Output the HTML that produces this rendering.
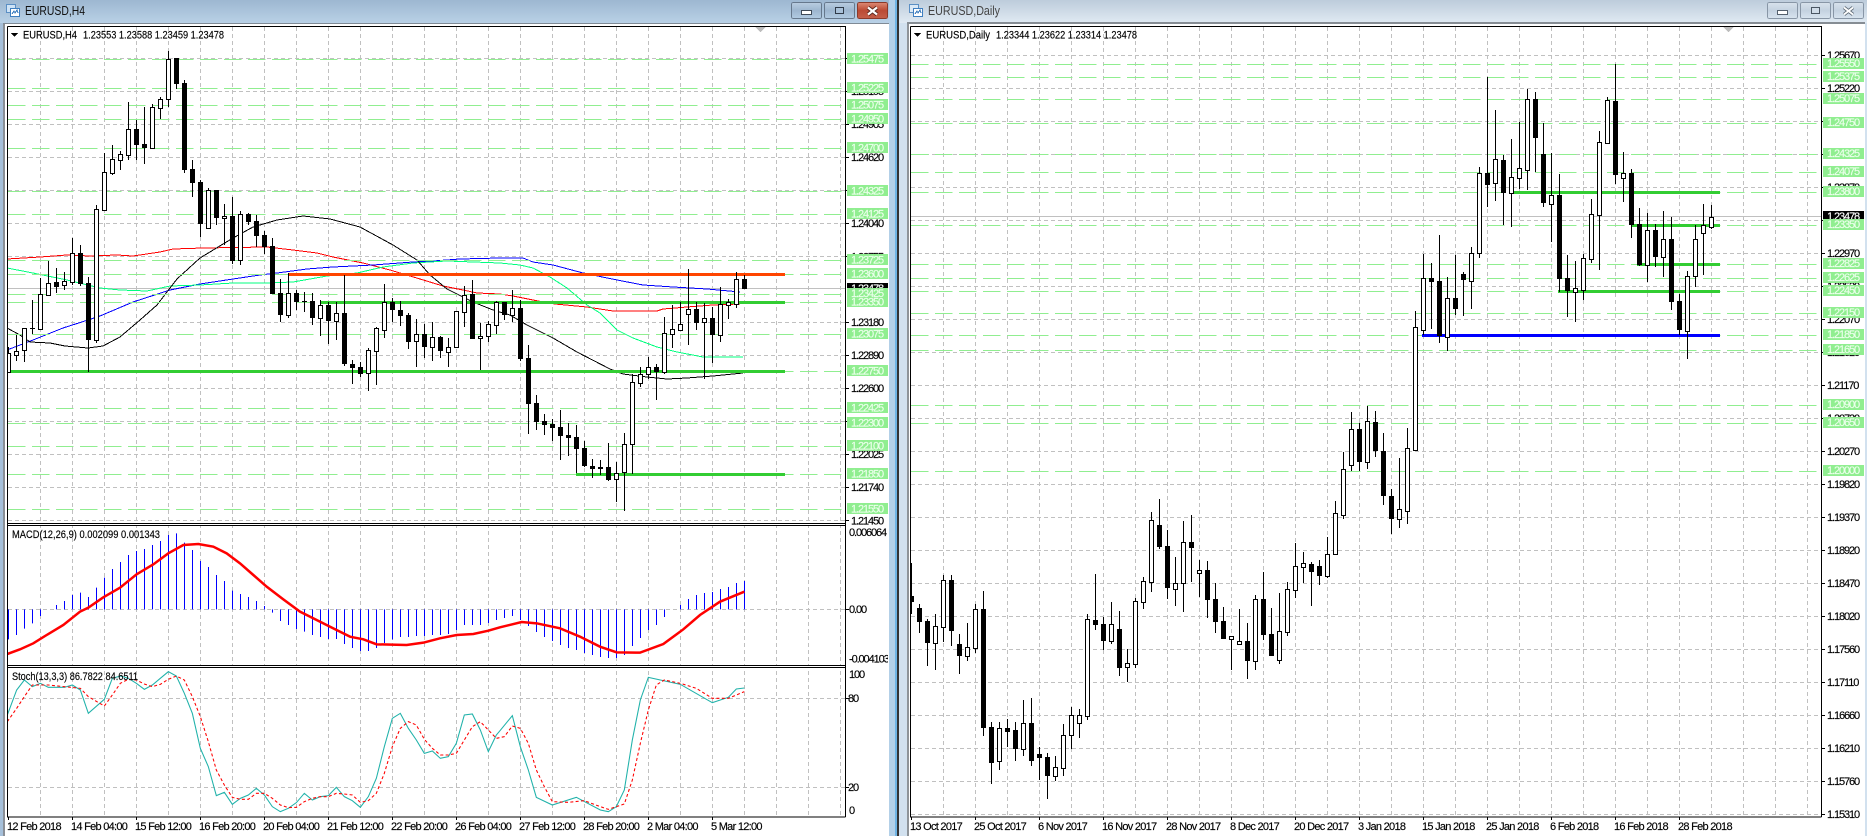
<!DOCTYPE html>
<html><head><meta charset="utf-8"><title>EURUSD</title>
<style>
html,body{margin:0;padding:0;width:1867px;height:836px;overflow:hidden;background:#fff}
svg{display:block;shape-rendering:crispEdges}
text{font-family:"Liberation Sans",sans-serif;font-size:11px;fill:#000;stroke:#000;stroke-width:.15px;letter-spacing:-1.1px}
.t{letter-spacing:-.72px}
.h{letter-spacing:0}
.l{fill:#eaffea;stroke:#eaffea}
.w{fill:#fff;stroke:#fff}
.g{stroke:#c0c0c0;stroke-width:1;stroke-dasharray:4 3;fill:none}
.d{stroke:#90ee90;stroke-width:1;stroke-dasharray:17.5 6.5;fill:none}
.n{fill:none}
</style></head><body>
<svg width="1867" height="836" viewBox="0 0 1867 836" xmlns="http://www.w3.org/2000/svg">
<defs>
<linearGradient id="tl" x1="0" y1="0" x2="0" y2="1"><stop offset="0" stop-color="#9db7d1"/><stop offset="1" stop-color="#b9d1e6"/></linearGradient>
<linearGradient id="tr" x1="0" y1="0" x2="0" y2="1"><stop offset="0" stop-color="#bdccdb"/><stop offset="1" stop-color="#e0eaf3"/></linearGradient>
<linearGradient id="bl" x1="0" y1="0" x2="0" y2="1"><stop offset="0" stop-color="#b9cde0"/><stop offset=".5" stop-color="#9db6cf"/><stop offset="1" stop-color="#b2cbe2"/></linearGradient>
<linearGradient id="bc" x1="0" y1="0" x2="0" y2="1"><stop offset="0" stop-color="#dd8a75"/><stop offset=".5" stop-color="#bb4a34"/><stop offset="1" stop-color="#c4604a"/></linearGradient>
<linearGradient id="br" x1="0" y1="0" x2="0" y2="1"><stop offset="0" stop-color="#d8e2ec"/><stop offset=".5" stop-color="#c4d2e0"/><stop offset="1" stop-color="#d8e4ef"/></linearGradient>
<clipPath id="cl"><rect x="8" y="27" width="837" height="790"/></clipPath>
<clipPath id="cr"><rect x="911" y="27" width="910" height="790"/></clipPath>
<clipPath id="cm"><rect x="847" y="640" width="41" height="30"/></clipPath>
</defs>

<!-- window frames -->
<rect width="1867" height="836" fill="#fff"/>
<rect x="0" y="0" width="890" height="23" fill="url(#tl)"/>
<rect x="0" y="23" width="3" height="813" fill="#a6c0da"/>
<rect x="3" y="23" width="2" height="813" fill="#8a8f96"/>
<rect x="3" y="23" width="886" height="1" fill="#7f8a95"/>
<rect x="889" y="0" width="8" height="836" fill="#b3d0e8"/>
<rect x="895" y="0" width="2" height="836" fill="#6fb4e4"/>
<rect x="897" y="0" width="2" height="836" fill="#333"/>
<rect x="899" y="0" width="968" height="23" fill="url(#tr)"/>
<rect x="899" y="23" width="8" height="813" fill="#d2e1ef"/>
<rect x="907" y="23" width="2" height="813" fill="#8f9499"/>
<rect x="907" y="22" width="958" height="2" fill="#868d94"/>
<rect x="1865" y="23" width="2" height="813" fill="#d2e1ef"/>

<!-- title bars -->
<g fill="none">
<rect x="6.5" y="4.5" width="9" height="8" fill="#cfe3f6" stroke="#5b8fc4"/>
<rect x="10.5" y="8.5" width="9" height="8" fill="#fff" stroke="#3f7fc0"/>
<path d="M12 14l2-3 1 2 2-3 1 3" stroke="#3f7fc0"/>
<rect x="909.5" y="4.5" width="9" height="8" fill="#dbe9f6" stroke="#5b8fc4"/>
<rect x="913.5" y="8.5" width="9" height="8" fill="#fff" stroke="#3f7fc0"/>
<path d="M915 14l2-3 1 2 2-3 1 3" stroke="#3f7fc0"/>
</g>
<text x="25" y="15" textLength="60" lengthAdjust="spacingAndGlyphs" class="h" style="font-size:12.5px;fill:#111;stroke:none">EURUSD,H4</text>
<text x="928" y="15" textLength="72" lengthAdjust="spacingAndGlyphs" class="h" style="font-size:12.5px;fill:#444;stroke:none">EURUSD,Daily</text>

<!-- buttons -->
<g stroke="#66788c">
<rect x="791.5" y="2.5" width="30" height="16" rx="2" fill="url(#bl)"/>
<rect x="824.5" y="2.5" width="30" height="16" rx="2" fill="url(#bl)"/>
<rect x="857.5" y="2.5" width="30" height="16" rx="2" fill="url(#bc)" stroke="#8c3a2a"/>
</g>
<rect x="801.5" y="10.5" width="10" height="4" fill="#fff" stroke="#3f4a58"/>
<rect x="835.5" y="7.5" width="8" height="6" fill="#a9c1d9" stroke="#2f3a48" stroke-width="1.4"/>
<path d="M868 7.5l9 7M877 7.5l-9 7" stroke="#5c2a20" stroke-width="4" fill="none" style="shape-rendering:auto"/>
<path d="M868 7.5l9 7M877 7.5l-9 7" stroke="#fff" stroke-width="2.2" fill="none" style="shape-rendering:auto"/>
<g stroke="#8896a6">
<rect x="1767.5" y="2.5" width="30" height="16" rx="2" fill="url(#br)"/>
<rect x="1800.5" y="2.5" width="30" height="16" rx="2" fill="url(#br)"/>
<rect x="1833.5" y="2.5" width="30" height="16" rx="2" fill="url(#br)"/>
</g>
<rect x="1777.5" y="10.5" width="10" height="4" fill="#fff" stroke="#55616e"/>
<rect x="1811.5" y="7.5" width="8" height="6" fill="#d0dce8" stroke="#4a5663" stroke-width="1.4"/>
<path d="M1844 7.5l9 7M1853 7.5l-9 7" stroke="#5d6975" stroke-width="3.6" fill="none" style="shape-rendering:auto"/>
<path d="M1844 7.5l9 7M1853 7.5l-9 7" stroke="#fff" stroke-width="1.8" fill="none" style="shape-rendering:auto"/>

<!-- ======== LEFT CHART ======== -->
<g clip-path="url(#cl)">
<path class="g" d="M40.5 27V817M72.5 27V817M104.5 27V817M136.5 27V817M168.5 27V817M200.5 27V817M232.5 27V817M264.5 27V817M296.5 27V817M328.5 27V817M360.5 27V817M392.5 27V817M424.5 27V817M456.5 27V817M488.5 27V817M520.5 27V817M552.5 27V817M584.5 27V817M616.5 27V817M648.5 27V817M680.5 27V817M712.5 27V817M744.5 27V817M776.5 27V817M808.5 27V817M840.5 27V817"/>
<path class="g" d="M8 58.5H845M8 91.5H845M8 124.5H845M8 157.5H845M8 190.5H845M8 223.5H845M8 256.5H845M8 322.5H845M8 355.5H845M8 388.5H845M8 421.5H845M8 454.5H845M8 487.5H845M8 520.5H845M8 609.5H845M8 698.5H845M8 787.5H845"/>
<path d="M8 288.5H845" stroke="#c0c0c0" fill="none"/>
<!-- moving averages -->
<polyline class="n" stroke="#ff0000" points="7,259 40,257 67,255 90,256 117,255 133,256 160,252 173,249 203,248 267,247 293,250 317,253 333,257 363,263 390,270 420,279 443,286 463,290 477,293 500,294 513,296 538,301 555,304 587,307 613,311 657,311 663,309 687,307 713,305 740,304"/>
<polyline class="n" stroke="#0000ff" points="7,350 33,340 63,328 88,320 100,316 133,302 170,290 200,284 233,279 260,275 277,273 307,269 333,267 373,265 413,262 433,261 460,259 500,258 523,258 533,262 553,265 583,273 617,280 643,285 673,287 707,289 740,292"/>
<polyline class="n" stroke="#00ff7f" points="7,268 33,273 67,280 100,288 120,290 147,291 170,286 200,285 233,283 267,283 293,282 327,276 357,273 383,267 413,263 447,261 500,263 520,265 533,268 550,277 567,288 587,305 600,313 617,330 633,338 657,347 677,352 703,357 743,357"/>
<polyline class="n" stroke="#000" points="7,328 20,335 30,342 50,343 65,346 88,348 103,346 120,337 140,320 157,305 170,288 177,279 200,258 233,238 253,227 277,220 303,216 330,219 360,227 393,245 417,260 430,275 447,289 473,302 493,310 510,315 527,325 553,338 577,352 610,369 623,374 647,377 667,379 687,378 713,376 743,373"/>
<!-- levels above averages -->
<path class="d" d="M8 59.5H845M8 88.5H845M8 105.5H845M8 119.5H845M8 148.5H845M8 191.5H845M8 214.5H845M8 260.5H845M8 274.5H845M8 294.5H845M8 302.5H845M8 334.5H845M8 371.5H845M8 408.5H845M8 423.5H845M8 446.5H845M8 474.5H845M8 509.5H845"/>
<path d="M288 274.5H785" stroke="#ff4500" stroke-width="3" fill="none"/>
<path d="M320 302.5H785M8 371.5H785M576 474.5H785" stroke="#32cd32" stroke-width="3" fill="none"/>
<!-- candles H4 -->
<path class="n" stroke="#000" d="M8.5 347V373M16.5 335V361M24.5 328V362M32.5 300V334M40.5 278V330M48.5 261V295M56.5 268V293M64.5 272V290M72.5 238V285M80.5 245V286M88.5 277V372M96.5 205V343M104.5 153V211M112.5 145V175M120.5 151V170M128.5 102V160M136.5 120V160M144.5 107V164M152.5 104V149M160.5 97V119M168.5 51V107M176.5 58V89M184.5 80V173M192.5 160V197M200.5 180V237M208.5 188V228M216.5 190V225M224.5 204V245M232.5 197V264M240.5 211V265M248.5 213V225M256.5 215V247M264.5 231V254M272.5 238V294M280.5 279V322M288.5 273V318M296.5 290V310M304.5 292V312M312.5 293V325M320.5 300V336M328.5 302V344M336.5 302V340M344.5 275V366M352.5 360V384M360.5 362V377M368.5 348V391M376.5 327V385M384.5 284V338M392.5 298V322M400.5 301V326M408.5 313V349M416.5 319V367M424.5 324V358M432.5 322V361M440.5 336V358M448.5 338V367M456.5 311V347M464.5 286V327M472.5 280V339M480.5 323V370M488.5 321V342M496.5 301V334M504.5 302V320M512.5 290V322M520.5 300V361M528.5 345V434M536.5 395V430M544.5 414V435M552.5 419V441M560.5 410V460M568.5 423V456M576.5 425V473M584.5 441V467M592.5 459V478M600.5 460V475M608.5 443V481M616.5 462V502M624.5 433V511M632.5 374V474M640.5 367V387M648.5 357V379M656.5 364V400M664.5 317V374M672.5 305V348M680.5 302V330M688.5 269V345M696.5 302V330M704.5 303V379M712.5 307V363M720.5 287V342M728.5 299V319M736.5 272V308M744.5 275V289"/>
<path fill="#fff" stroke="#000" d="M6.5 353.5h4v19h-4zM14.5 351.5h4v4h-4zM22.5 328.5h4v22h-4zM38.5 294.5h4v35h-4zM46.5 283.5h4v12h-4zM62.5 281.5h4v4h-4zM70.5 253.5h4v29h-4zM94.5 209.5h4v131h-4zM102.5 172.5h4v38h-4zM110.5 159.5h4v14h-4zM118.5 154.5h4v6h-4zM126.5 129.5h4v26h-4zM150.5 107.5h4v41h-4zM158.5 99.5h4v9h-4zM166.5 59.5h4v40h-4zM206.5 190.5h4v38h-4zM222.5 216.5h4v2h-4zM238.5 214.5h4v46h-4zM286.5 293.5h4v22h-4zM318.5 305.5h4v13h-4zM334.5 313.5h4v8h-4zM366.5 350.5h4v23h-4zM374.5 328.5h4v23h-4zM382.5 302.5h4v28h-4zM414.5 334.5h4v7h-4zM430.5 337.5h4v10h-4zM446.5 347.5h4v5h-4zM454.5 311.5h4v36h-4zM462.5 295.5h4v17h-4zM478.5 336.5h4v2h-4zM486.5 324.5h4v12h-4zM494.5 302.5h4v23h-4zM510.5 308.5h4v7h-4zM614.5 473.5h4v6h-4zM622.5 444.5h4v28h-4zM630.5 382.5h4v62h-4zM638.5 374.5h4v9h-4zM646.5 367.5h4v7h-4zM662.5 333.5h4v39h-4zM670.5 329.5h4v5h-4zM678.5 324.5h4v6h-4zM686.5 309.5h4v5h-4zM702.5 318.5h4v4h-4zM718.5 304.5h4v31h-4zM726.5 302.5h4v3h-4zM734.5 279.5h4v25h-4z"/>
<path fill="#000" d="M30 328h5v1h-5zM54 282h5v5h-5zM78 253h5v31h-5zM86 283h5v57h-5zM134 129h5v16h-5zM142 144h5v4h-5zM174 58h5v26h-5zM182 83h5v87h-5zM190 169h5v14h-5zM198 182h5v42h-5zM214 190h5v28h-5zM230 216h5v45h-5zM246 214h5v8h-5zM254 221h5v15h-5zM262 235h5v12h-5zM270 246h5v48h-5zM278 293h5v22h-5zM294 293h5v9h-5zM302 301h5v1h-5zM310 301h5v17h-5zM326 305h5v16h-5zM342 313h5v51h-5zM350 364h5v4h-5zM358 367h5v7h-5zM390 302h5v8h-5zM398 310h5v6h-5zM406 315h5v27h-5zM422 334h5v13h-5zM438 337h5v14h-5zM470 294h5v45h-5zM502 302h5v13h-5zM518 308h5v51h-5zM526 358h5v46h-5zM534 403h5v19h-5zM542 421h5v4h-5zM550 424h5v4h-5zM558 427h5v9h-5zM566 435h5v3h-5zM574 437h5v12h-5zM582 448h5v18h-5zM590 466h5v3h-5zM598 467h5v2h-5zM606 467h5v13h-5zM654 367h5v5h-5zM694 309h5v14h-5zM710 318h5v17h-5zM742 279h5v10h-5z"/>
<!-- MACD bars -->
<path class="n" stroke="#0000ff" transform="translate(0 540) scale(1 .33333)" d="M8.5 208V298M16.5 208V285M24.5 208V266M32.5 208V250M40.5 208V228M56.5 208V195M64.5 208V183M72.5 208V165M80.5 208V158M88.5 208V171M96.5 208V143M104.5 208V113M112.5 208V87M120.5 208V66M128.5 208V45M136.5 208V33M144.5 208V27M152.5 208V15M160.5 208V3M168.5 208V-15M176.5 208V-20M184.5 208V8M192.5 208V30M200.5 208V63M208.5 208V81M216.5 208V105M224.5 208V123M232.5 208V152M240.5 208V162M248.5 208V171M256.5 208V183M264.5 208V198M272.5 208V218M280.5 208V243M288.5 208V255M296.5 208V267M304.5 208V275M312.5 208V285M320.5 208V291M328.5 208V297M336.5 208V297M344.5 208V312M352.5 208V324M360.5 208V333M368.5 208V333M376.5 208V324M384.5 208V309M392.5 208V298M400.5 208V291M408.5 208V291M416.5 208V288M424.5 208V288M432.5 208V285M440.5 208V285M448.5 208V282M456.5 208V270M464.5 208V255M472.5 208V255M480.5 208V255M488.5 208V249M496.5 208V240M504.5 208V234M512.5 208V228M520.5 208V240M528.5 208V258M536.5 208V276M544.5 208V291M552.5 208V303M560.5 208V315M568.5 208V324M576.5 208V330M584.5 208V339M592.5 208V345M600.5 208V351M608.5 208V354M616.5 208V354M624.5 208V345M632.5 208V318M640.5 208V294M648.5 208V270M656.5 208V255M664.5 208V231M680.5 208V195M688.5 208V177M696.5 208V165M704.5 208V159M712.5 208V156M720.5 208V147M728.5 208V141M736.5 208V129M744.5 208V123"/>
<g transform="translate(0 540) scale(.33333)" fill="none" style="shape-rendering:auto">
<polyline stroke="#ff0000" stroke-width="7.500" points="22,342 60,328 100,310 140,285 190,255 240,215 265,203 310,172 360,143 410,103 460,73 505,40 550,15 595,12 640,20 680,40 720,70 760,105 800,140 850,178 900,215 950,240 1000,265 1050,290 1090,298 1130,313 1220,315 1270,308 1320,295 1370,285 1420,282 1465,272 1500,262 1565,246 1610,250 1680,265 1740,290 1800,320 1850,337 1920,338 1990,312 2050,268 2100,225 2160,185 2233,155"/>
<polyline stroke="#20b2aa" stroke-width="3.200" points="22,525 50,450 73,420 97,440 121,430 145,442 193,442 217,435 241,450 265,520 313,478 337,415 361,408 385,415 409,430 433,448 457,435 481,415 505,395 529,408 553,460 577,520 601,625 625,680 649,767 673,757 697,793 721,775 745,765 769,745 793,765 817,800 841,815 865,805 889,788 913,760 937,780 961,770 985,767 1009,742 1033,770 1057,782 1081,802 1105,770 1129,715 1153,620 1177,535 1201,520 1225,565 1249,600 1273,640 1297,633 1321,655 1345,650 1369,610 1393,525 1417,522 1441,570 1465,635 1489,585 1500,572 1537,527 1561,620 1585,690 1609,772 1657,795 1729,772 1801,810 1825,815 1849,800 1873,750 1897,600 1921,480 1945,412 2041,433 2137,488 2185,472 2209,447 2233,444"/>
<polyline stroke="#ff0000" stroke-width="3.200" stroke-dasharray="9 7" points="22,545 50,505 73,470 97,435 145,435 193,440 241,445 265,470 313,498 337,465 361,430 385,418 409,420 433,432 457,440 481,433 505,418 529,408 553,420 577,470 601,530 625,605 649,690 673,735 697,772 721,778 745,778 769,760 793,760 817,775 841,795 865,803 889,802 913,785 937,775 961,770 985,770 1009,760 1033,762 1057,765 1081,787 1105,782 1129,760 1153,700 1177,620 1201,565 1225,545 1249,555 1273,598 1297,625 1321,645 1345,645 1369,640 1393,600 1417,560 1441,545 1465,570 1489,595 1513,590 1537,558 1561,565 1585,610 1609,690 1633,740 1657,785 1705,787 1753,782 1801,800 1825,808 1873,792 1897,720 1921,610 1945,510 1969,435 1993,420 2041,430 2089,445 2137,475 2185,475 2233,455"/>
</g>
<rect x="8" y="524" width="837" height="1" fill="#fff"/>
<rect x="8" y="666" width="837" height="1" fill="#fff"/>
</g>
<path d="M755 27h11l-5.500 5z" fill="#bdbdbd"/>
<!-- left chart frame -->
<path class="n" stroke="#000" d="M7.500 26.500H845.500V817M7.500 26.500V817H845.500M8 523.500H845M8 525.500H845M8 665.500H845M8 667.500H845"/>
<path d="M11 33h7l-3.500 4z" fill="#000"/>
<text x="23" y="38.500" textLength="54" lengthAdjust="spacingAndGlyphs" class="h">EURUSD,H4</text>
<text x="83" y="38.500" textLength="141" lengthAdjust="spacingAndGlyphs" class="h">1.23553 1.23588 1.23459 1.23478</text>
<text x="12" y="538" textLength="148" lengthAdjust="spacingAndGlyphs" class="h">MACD(12,26,9) 0.002099 0.001343</text>
<text x="12" y="680" textLength="126" lengthAdjust="spacingAndGlyphs" class="h">Stoch(13,3,3) 86.7822 84.6511</text>

<!-- left axis -->
<path class="n" stroke="#000" d="M846 58.500h3M846 91.500h3M846 124.500h3M846 157.500h3M846 190.500h3M846 223.500h3M846 256.500h3M846 322.500h3M846 355.500h3M846 388.500h3M846 421.500h3M846 454.500h3M846 487.500h3M846 520.500h3M846 609.500h3M846 698.500h3M846 787.500h3M8.500 817v3M72.500 817v3M136.500 817v3M200.500 817v3M264.500 817v3M328.500 817v3M392.500 817v3M456.500 817v3M520.500 817v3M584.500 817v3M648.500 817v3M712.500 817v3"/>
<g>
<text x="851" y="95">1.25195</text><text x="851" y="128">1.24905</text><text x="851" y="161">1.24620</text><text x="851" y="227">1.24040</text><text x="851" y="260.500">1.23755</text><text x="851" y="326">1.23180</text><text x="851" y="359">1.22890</text><text x="851" y="392">1.22600</text><text x="851" y="458">1.22025</text><text x="851" y="491">1.21740</text><text x="851" y="524.500">1.21450</text>
</g>
<g clip-path="url(#cm)"><text x="849" y="662.500">-0.004103</text></g>
<text x="849" y="536">0.006064</text>
<text x="849" y="613">0.00</text>
<text x="849" y="678">100</text>
<text x="848" y="702">80</text>
<text x="848" y="791">20</text>
<text x="849" y="814">0</text>
<rect x="847" y="283" width="41" height="11" fill="#000"/>
<text x="851" y="292" class="w">1.23478</text>
<g fill="#90ee90">
<rect x="847" y="53" width="41" height="11"/><rect x="847" y="82" width="41" height="11"/><rect x="847" y="99" width="41" height="11"/><rect x="847" y="113" width="41" height="11"/><rect x="847" y="142" width="41" height="11"/><rect x="847" y="185" width="41" height="11"/><rect x="847" y="208" width="41" height="11"/><rect x="847" y="254" width="41" height="11"/><rect x="847" y="268" width="41" height="11"/><rect x="847" y="288" width="41" height="11"/><rect x="847" y="296" width="41" height="11"/><rect x="847" y="328" width="41" height="11"/><rect x="847" y="365" width="41" height="11"/><rect x="847" y="402" width="41" height="11"/><rect x="847" y="417" width="41" height="11"/><rect x="847" y="440" width="41" height="11"/><rect x="847" y="468" width="41" height="11"/><rect x="847" y="503" width="41" height="11"/>
</g>
<g>
<text class="l" x="851" y="62.500">1.25475</text><text class="l" x="851" y="91.500">1.25225</text><text class="l" x="851" y="108.500">1.25075</text><text class="l" x="851" y="122.500">1.24950</text><text class="l" x="851" y="151.500">1.24700</text><text class="l" x="851" y="194.500">1.24325</text><text class="l" x="851" y="217.500">1.24125</text><text class="l" x="851" y="263.500">1.23725</text><text class="l" x="851" y="277.500">1.23600</text><text class="l" x="851" y="297">1.23425</text><text class="l" x="851" y="305.500">1.23350</text><text class="l" x="851" y="337.500">1.23075</text><text class="l" x="851" y="374.500">1.22750</text><text class="l" x="851" y="411.500">1.22425</text><text class="l" x="851" y="426.500">1.22300</text><text class="l" x="851" y="449.500">1.22100</text><text class="l" x="851" y="477.500">1.21850</text><text class="l" x="851" y="512.500">1.21550</text>
</g>
<g>
<text class="t" x="7" y="830">12 Feb 2018</text><text class="t" x="71" y="830">14 Feb 04:00</text><text class="t" x="135" y="830">15 Feb 12:00</text><text class="t" x="199" y="830">16 Feb 20:00</text><text class="t" x="263" y="830">20 Feb 04:00</text><text class="t" x="327" y="830">21 Feb 12:00</text><text class="t" x="391" y="830">22 Feb 20:00</text><text class="t" x="455" y="830">26 Feb 04:00</text><text class="t" x="519" y="830">27 Feb 12:00</text><text class="t" x="583" y="830">28 Feb 20:00</text><text class="t" x="647" y="830">2 Mar 04:00</text><text class="t" x="711" y="830">5 Mar 12:00</text>
</g>

<!-- ======== RIGHT CHART ======== -->
<g clip-path="url(#cr)">
<path class="g" d="M943.500 27V817M975.500 27V817M1007.500 27V817M1039.500 27V817M1071.500 27V817M1103.500 27V817M1135.500 27V817M1167.500 27V817M1199.500 27V817M1231.500 27V817M1263.500 27V817M1295.500 27V817M1327.500 27V817M1359.500 27V817M1391.500 27V817M1423.500 27V817M1455.500 27V817M1487.500 27V817M1519.500 27V817M1551.500 27V817M1583.500 27V817M1615.500 27V817M1647.500 27V817M1679.500 27V817M1711.500 27V817M1743.500 27V817M1775.500 27V817M1807.500 27V817"/>
<path class="g" d="M911 55.500H1821M911 88.500H1821M911 121.500H1821M911 154.500H1821M911 187.500H1821M911 220.500H1821M911 253.500H1821M911 286.500H1821M911 319.500H1821M911 352.500H1821M911 385.500H1821M911 418.500H1821M911 451.500H1821M911 484.500H1821M911 517.500H1821M911 550.500H1821M911 583.500H1821M911 616.500H1821M911 649.500H1821M911 682.500H1821M911 715.500H1821M911 748.500H1821M911 781.500H1821M911 814.500H1821"/>
<path class="d" d="M911 64.500H1821M911 77.500H1821M911 99.500H1821M911 123.500H1821M911 154.500H1821M911 172.500H1821M911 192.500H1821M911 225.500H1821M911 264.500H1821M911 278.500H1821M911 291.500H1821M911 313.500H1821M911 335.500H1821M911 350.500H1821M911 405.500H1821M911 423.500H1821M911 471.500H1821"/>
<path d="M911 216.500H1821" stroke="#c0c0c0" fill="none"/>
<path d="M1510 192.500H1720M1632 225.500H1720M1637 264.500H1720M1558 291.500H1720" stroke="#32cd32" stroke-width="3" fill="none"/>
<path d="M1422 335.500H1720" stroke="#0000ff" stroke-width="3" fill="none"/>
<path class="n" stroke="#000" d="M911.500 563V614M919.500 604V633M927.500 619V666M935.500 614V670M943.500 575V642M951.500 575V646M959.500 634V674M967.500 623V661M975.500 604V653M983.500 591V736M991.500 722V784M999.500 722V770M1007.500 719V747M1015.500 722V761M1023.500 700V756M1031.500 698V766M1039.500 747V780M1047.500 753V799M1055.500 756V781M1063.500 724V776M1071.500 707V749M1079.500 709V738M1087.500 614V720M1095.500 574V630M1103.500 617V650M1111.500 602V644M1119.500 611V676M1127.500 649V682M1135.500 598V668M1143.500 577V609M1151.500 512V592M1159.500 499V549M1167.500 530V599M1175.500 557V606M1183.500 521V612M1191.500 515V582M1199.500 560V597M1207.500 561V618M1215.500 583V633M1223.500 607V639M1231.500 636V670M1239.500 609V645M1247.500 623V679M1255.500 595V670M1263.500 572V640M1271.500 608V656M1279.500 593V664M1287.500 582V636M1295.500 543V598M1303.500 552V583M1311.500 562V606M1319.500 560V585M1327.500 537V578M1335.500 501V554M1343.500 452V519M1351.500 412V471M1359.500 423V471M1367.500 406V469M1375.500 411V457M1383.500 433V505M1391.500 489V534M1399.500 458V528M1407.500 428V524M1415.500 311V450M1423.500 254V335M1431.500 263V329M1439.500 235V343M1447.500 277V351M1455.500 255V315M1463.500 272V316M1471.500 247V309M1479.500 167V258M1487.500 77V207M1495.500 110V201M1503.500 155V225M1511.500 139V227M1519.500 122V189M1527.500 89V190M1535.500 92V172M1543.500 123V207M1551.500 153V242M1559.500 174V292M1567.500 255V317M1575.500 261V322M1583.500 254V300M1591.500 199V263M1599.500 131V270M1607.500 97V143M1615.500 64V184M1623.500 152V202M1631.500 169V238M1639.500 208V266M1647.500 213V282M1655.500 224V267M1663.500 211V277M1671.500 217V310M1679.500 294V335M1687.500 271V359M1695.500 225V287M1703.500 204V275M1711.500 205V229"/>
<path fill="#fff" stroke="#000" d="M933.500 626.500h4v17h-4zM941.500 580.500h4v47h-4zM965.500 647.500h4v9h-4zM973.500 609.500h4v39h-4zM997.500 728.500h4v33h-4zM1021.500 723.500h4v26h-4zM1053.500 767.500h4v9h-4zM1061.500 735.500h4v33h-4zM1069.500 715.500h4v20h-4zM1077.500 715.500h4v8h-4zM1085.500 619.500h4v97h-4zM1109.500 624.500h4v17h-4zM1125.500 663.500h4v4h-4zM1133.500 601.500h4v63h-4zM1141.500 581.500h4v21h-4zM1149.500 520.500h4v62h-4zM1173.500 583.500h4v6h-4zM1181.500 542.500h4v41h-4zM1197.500 570.500h4v3h-4zM1229.500 636.500h4v3h-4zM1237.500 641.500h4v3h-4zM1253.500 599.500h4v62h-4zM1277.500 631.500h4v29h-4zM1285.500 589.500h4v43h-4zM1293.500 566.500h4v24h-4zM1301.500 563.500h4v4h-4zM1325.500 554.500h4v22h-4zM1333.500 513.500h4v41h-4zM1341.500 469.500h4v46h-4zM1349.500 429.500h4v36h-4zM1365.500 421.500h4v41h-4zM1397.500 509.500h4v10h-4zM1405.500 448.500h4v63h-4zM1413.500 327.500h4v123h-4zM1421.500 278.500h4v52h-4zM1445.500 298.500h4v39h-4zM1469.500 253.500h4v28h-4zM1477.500 173.500h4v80h-4zM1493.500 159.500h4v24h-4zM1509.500 177.500h4v16h-4zM1517.500 168.500h4v10h-4zM1525.500 99.500h4v71h-4zM1549.500 195.500h4v9h-4zM1573.500 288.500h4v4h-4zM1581.500 258.500h4v32h-4zM1589.500 214.500h4v45h-4zM1597.500 142.500h4v73h-4zM1605.500 100.500h4v43h-4zM1621.500 173.500h4v5h-4zM1645.500 230.500h4v35h-4zM1661.500 239.500h4v18h-4zM1685.500 276.500h4v55h-4zM1693.500 239.500h4v37h-4zM1701.500 225.500h4v8h-4zM1709.500 217.500h4v10h-4z"/>
<path fill="#000" d="M909 596h5v6h-5zM917 608h5v14h-5zM925 621h5v22h-5zM949 580h5v51h-5zM957 644h5v12h-5zM981 609h5v119h-5zM989 727h5v36h-5zM1005 728h5v4h-5zM1013 730h5v19h-5zM1029 723h5v38h-5zM1037 754h5v4h-5zM1045 757h5v19h-5zM1093 620h5v5h-5zM1101 624h5v17h-5zM1117 629h5v39h-5zM1157 525h5v22h-5zM1165 546h5v42h-5zM1189 542h5v6h-5zM1205 570h5v30h-5zM1213 599h5v23h-5zM1221 621h5v18h-5zM1245 641h5v20h-5zM1261 599h5v36h-5zM1269 634h5v22h-5zM1309 564h5v8h-5zM1317 566h5v10h-5zM1357 429h5v33h-5zM1373 422h5v29h-5zM1381 451h5v45h-5zM1389 496h5v23h-5zM1429 278h5v4h-5zM1437 281h5v55h-5zM1453 298h5v11h-5zM1461 274h5v6h-5zM1485 173h5v12h-5zM1501 160h5v33h-5zM1533 99h5v39h-5zM1541 154h5v49h-5zM1557 195h5v84h-5zM1565 278h5v13h-5zM1613 101h5v74h-5zM1629 173h5v52h-5zM1637 224h5v41h-5zM1653 230h5v27h-5zM1669 239h5v63h-5zM1677 301h5v29h-5z"/>
</g>
<path d="M1723 27h11l-5.500 5z" fill="#bdbdbd"/>
<path class="n" stroke="#000" d="M910.500 26.500H1821.500V817M910.500 26.500V817H1821.500"/>
<path d="M914 33h7l-3.500 4z" fill="#000"/>
<text x="926" y="38.500" textLength="64" lengthAdjust="spacingAndGlyphs" class="h">EURUSD,Daily</text>
<text x="996" y="38.500" textLength="141" lengthAdjust="spacingAndGlyphs" class="h">1.23344 1.23622 1.23314 1.23478</text>

<path class="n" stroke="#000" d="M1822 55.500h3M1822 88.500h3M1822 121.500h3M1822 154.500h3M1822 187.500h3M1822 220.500h3M1822 253.500h3M1822 286.500h3M1822 319.500h3M1822 352.500h3M1822 385.500h3M1822 418.500h3M1822 451.500h3M1822 484.500h3M1822 517.500h3M1822 550.500h3M1822 583.500h3M1822 616.500h3M1822 649.500h3M1822 682.500h3M1822 715.500h3M1822 748.500h3M1822 781.500h3M1822 814.500h3M911.500 817v3M975.500 817v3M1039.500 817v3M1103.500 817v3M1167.500 817v3M1231.500 817v3M1295.500 817v3M1359.500 817v3M1423.500 817v3M1487.500 817v3M1551.500 817v3M1615.500 817v3M1679.500 817v3"/>
<g>
<text x="1827" y="59">1.25670</text><text x="1827" y="92">1.25220</text><text x="1827" y="125">1.24770</text><text x="1827" y="158">1.24320</text><text x="1827" y="191">1.23870</text><text x="1827" y="257">1.22970</text><text x="1827" y="290">1.22520</text><text x="1827" y="323">1.22070</text><text x="1827" y="356">1.21620</text><text x="1827" y="389">1.21170</text><text x="1827" y="422">1.20720</text><text x="1827" y="455">1.20270</text><text x="1827" y="488">1.19820</text><text x="1827" y="521">1.19370</text><text x="1827" y="554">1.18920</text><text x="1827" y="587">1.18470</text><text x="1827" y="620">1.18020</text><text x="1827" y="653">1.17560</text><text x="1827" y="686">1.17110</text><text x="1827" y="719">1.16660</text><text x="1827" y="752">1.16210</text><text x="1827" y="785">1.15760</text><text x="1827" y="818">1.15310</text>
</g>
<rect x="1823" y="211" width="41" height="11" fill="#000"/>
<text x="1827" y="220" class="w">1.23478</text>
<g fill="#90ee90">
<rect x="1823" y="58" width="41" height="11"/><rect x="1823" y="71" width="41" height="11"/><rect x="1823" y="93" width="41" height="11"/><rect x="1823" y="117" width="41" height="11"/><rect x="1823" y="148" width="41" height="11"/><rect x="1823" y="166" width="41" height="11"/><rect x="1823" y="186" width="41" height="11"/><rect x="1823" y="219" width="41" height="11"/><rect x="1823" y="258" width="41" height="11"/><rect x="1823" y="272" width="41" height="11"/><rect x="1823" y="285" width="41" height="11"/><rect x="1823" y="307" width="41" height="11"/><rect x="1823" y="329" width="41" height="11"/><rect x="1823" y="344" width="41" height="11"/><rect x="1823" y="399" width="41" height="11"/><rect x="1823" y="417" width="41" height="11"/><rect x="1823" y="465" width="41" height="11"/>
</g>
<g>
<text class="l" x="1827" y="67">1.25550</text><text class="l" x="1827" y="80">1.25375</text><text class="l" x="1827" y="102">1.25075</text><text class="l" x="1827" y="126">1.24750</text><text class="l" x="1827" y="157">1.24325</text><text class="l" x="1827" y="175">1.24075</text><text class="l" x="1827" y="195">1.23800</text><text class="l" x="1827" y="228">1.23350</text><text class="l" x="1827" y="267">1.22825</text><text class="l" x="1827" y="281">1.22625</text><text class="l" x="1827" y="294">1.22450</text><text class="l" x="1827" y="316">1.22150</text><text class="l" x="1827" y="338">1.21850</text><text class="l" x="1827" y="353">1.21650</text><text class="l" x="1827" y="408">1.20900</text><text class="l" x="1827" y="426">1.20650</text><text class="l" x="1827" y="474">1.20000</text>
</g>
<g>
<text class="t" x="910" y="830">13 Oct 2017</text><text class="t" x="974" y="830">25 Oct 2017</text><text class="t" x="1038" y="830">6 Nov 2017</text><text class="t" x="1102" y="830">16 Nov 2017</text><text class="t" x="1166" y="830">28 Nov 2017</text><text class="t" x="1230" y="830">8 Dec 2017</text><text class="t" x="1294" y="830">20 Dec 2017</text><text class="t" x="1358" y="830">3 Jan 2018</text><text class="t" x="1422" y="830">15 Jan 2018</text><text class="t" x="1486" y="830">25 Jan 2018</text><text class="t" x="1550" y="830">6 Feb 2018</text><text class="t" x="1614" y="830">16 Feb 2018</text><text class="t" x="1678" y="830">28 Feb 2018</text>
</g>
</svg>
</body></html>
